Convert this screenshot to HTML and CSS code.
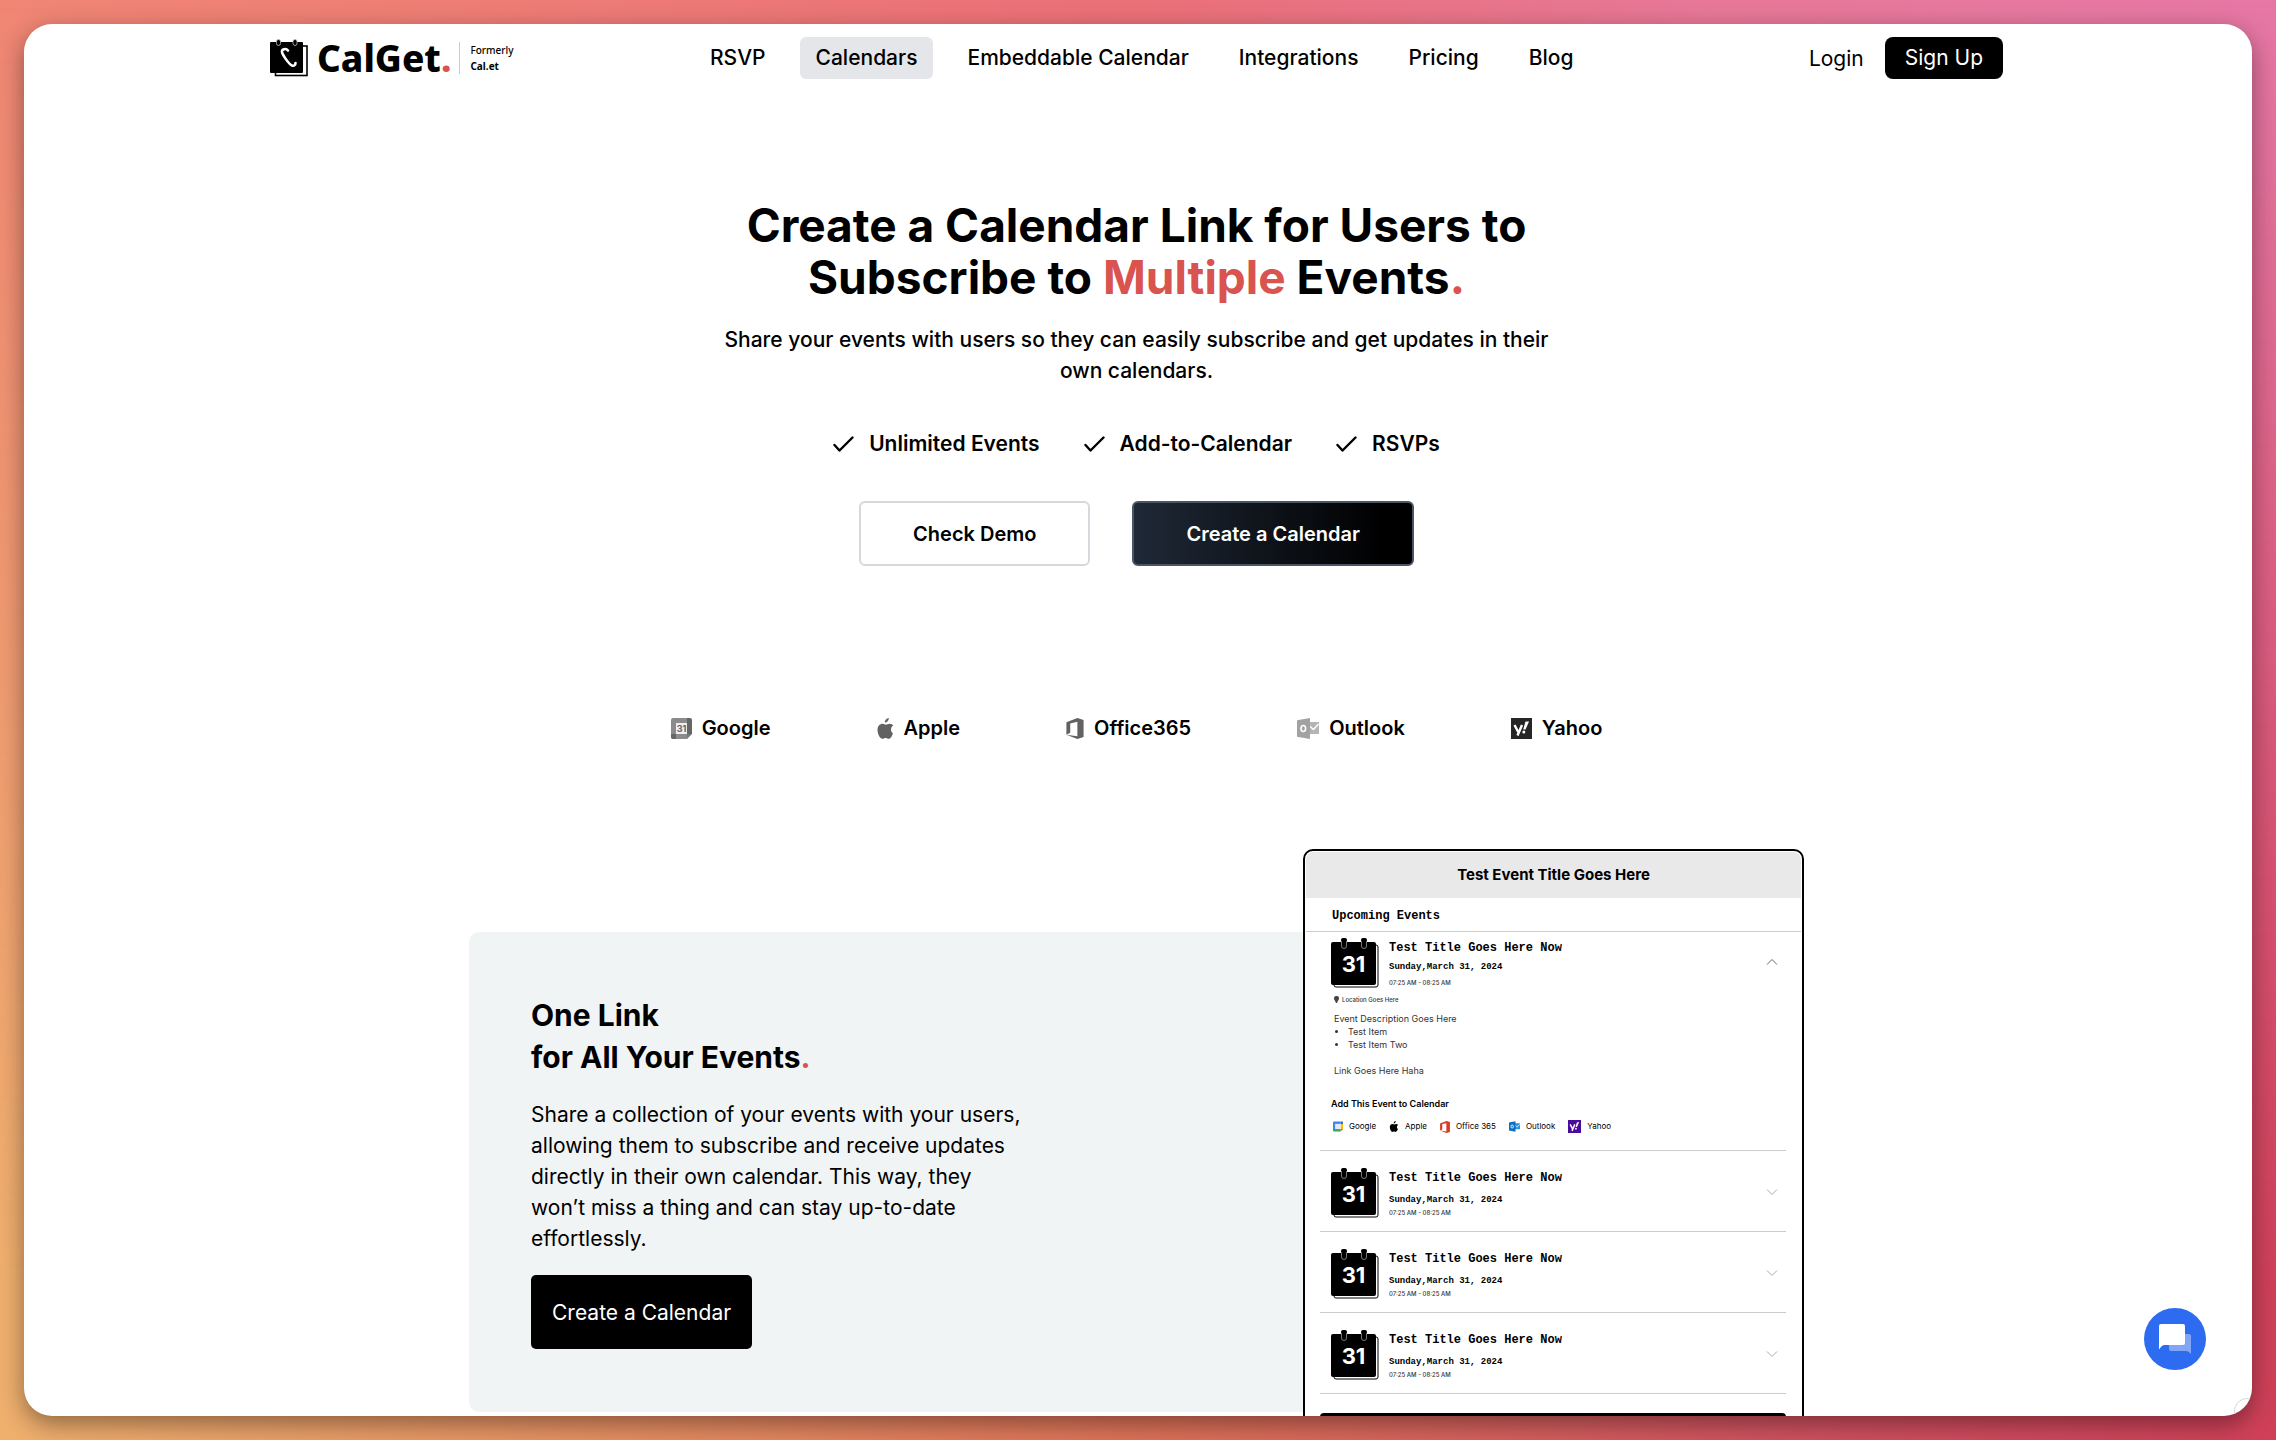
FILE: index.html
```html
<!DOCTYPE html>
<html lang="en">
<head>
<meta charset="utf-8">
<title>CalGet – Calendars</title>
<link rel="stylesheet" href="styles.css">
</head>
<body>
<svg class="sprite" aria-hidden="true">
  <symbol id="day" viewBox="0 0 48 50">
    <rect x="3" y="7" width="44" height="42" rx="2" fill="#fff" stroke="#000"/>
    <rect x="0" y="4" width="45" height="43" rx="2" fill="#000"/>
    <rect x="10.500" y="0.500" width="5" height="10" rx="2.500" fill="#000" stroke="#aaa" stroke-width=".7"/>
    <rect x="30.500" y="0.500" width="5" height="10" rx="2.500" fill="#000" stroke="#aaa" stroke-width=".7"/>
    <rect x="10" y="0" width="6" height="4" rx="2" fill="#000"/><rect x="30" y="0" width="6" height="4" rx="2" fill="#000"/>
  </symbol>
  <symbol id="check" viewBox="0 0 21 16"><path d="M1.500 9l5 5.500L19.500 1.500" fill="none" stroke="#000" stroke-width="2.400" stroke-linecap="round" stroke-linejoin="round"/></symbol>
  <symbol id="chevron" viewBox="0 0 12 8"><path d="M1 1.500l5 5 5-5" fill="none" stroke="currentColor"/></symbol>
  <symbol id="apple" viewBox="0 0 17 21"><path fill="currentColor" d="M11.800 0c.2 2.300-1.700 4.500-3.900 4.600C7.600 2.400 9.600.300 11.800 0zM16 15.400c-.9 2.200-2.400 5.300-4.200 5.400-1.200 0-1.700-.8-3.200-.8s-2 .8-3.200.8C3 20.800.500 16 .500 12c0-4 2.500-6.200 5-6.200 1.400 0 2.500.9 3.400.9.800 0 2.200-1 3.900-1 1.400.1 2.600.7 3.400 1.900-3.100 1.800-2.600 6.400-.2 7.800z"/></symbol>
  <symbol id="office" viewBox="0 0 18 22"><path fill="currentColor" d="M0 4.500L11.500 0 18 2v18l-6.500 2L0 17.500l11.500 1.600V3.900L4 5.700v9.800l-4 2z"/></symbol>
</svg>

<div class="panel">
  <header class="top">
    <a class="brand" href="#">
      <svg class="brand-mark" viewBox="0 0 38 38" aria-hidden="true">
        <rect x="5.500" y="7" width="31.500" height="29.500" fill="#fff" stroke="#000" stroke-width="1.600"/>
        <rect x="0" y="3" width="33" height="31" rx="1" fill="#000"/>
        <rect x="6.500" y=".5" width="4" height="6" rx="2" fill="#000" stroke="#bbb" stroke-width=".8"/>
        <rect x="23" y=".5" width="4" height="6" rx="2" fill="#000" stroke="#bbb" stroke-width=".8"/>
        <path d="M18 11.500c-2-2.500-6.500-1.500-6 1.500.5 2.500 6.500 12 10 13.500 2 .8 3.500-.5 3.500-2.500" fill="none" stroke="#fff" stroke-width="2.600" stroke-linecap="round"/>
      </svg>
      <span class="brand-name">CalGet<span class="accent">.</span></span>
      <span class="brand-note">Formerly<b>Cal.et</b></span>
    </a>
    <nav class="menu">
      <a href="#">RSVP</a>
      <a href="#" class="current" aria-current="page">Calendars</a>
      <a href="#">Embeddable Calendar</a>
      <a href="#">Integrations</a>
      <a href="#">Pricing</a>
      <a href="#">Blog</a>
    </nav>
    <div class="account">
      <a href="#">Login</a>
      <a href="#" class="signup">Sign Up</a>
    </div>
  </header>

  <main>
    <section class="hero">
      <h1>Create a Calendar Link for Users to Subscribe to <span class="accent">Multiple</span> Events<span class="accent">.</span></h1>
      <p class="lead">Share your events with users so they can easily subscribe and get updates in their own calendars.</p>
      <ul class="features">
        <li><svg><use href="#check"/></svg>Unlimited Events</li>
        <li><svg><use href="#check"/></svg>Add-to-Calendar</li>
        <li><svg><use href="#check"/></svg>RSVPs</li>
      </ul>
      <div class="actions">
        <button type="button" class="btn btn-light">Check Demo</button>
        <button type="button" class="btn btn-dark">Create a Calendar</button>
      </div>
    </section>

    <ul class="providers">
      <li><svg width="21" height="21" viewBox="0 0 21 21"><path fill="#8b8b8b" d="M0 2a2 2 0 012-2h14v5H5v11h11v5H2a2 2 0 01-2-2z"/><path fill="#666" d="M16 0h3a2 2 0 012 2v3h-5zM16 5h5v11h-5zM0 16h5v5H2a2 2 0 01-2-2z"/><path fill="#777" d="M16 16h5l-5 5z"/><path fill="#eee" d="M5 5h11v11H5z"/><text x="10.500" y="14" text-anchor="middle" class="mini-day">31</text></svg>Google</li>
      <li><svg class="grey" width="17" height="21"><use href="#apple"/></svg>Apple</li>
      <li><svg class="grey" width="18" height="21"><use href="#office"/></svg>Office365</li>
      <li><svg width="22" height="21" viewBox="0 0 22 21"><path fill="#b5b5b5" d="M12 4h10v12H12z"/><path d="M12.500 8l4 3.500L21.500 6" fill="none" stroke="#fff" stroke-width="1.400"/><path fill="#a2a2a2" d="M0 2.300L13 0v21L0 18.700z"/><ellipse cx="6.300" cy="10.500" rx="2.300" ry="3" fill="none" stroke="#fff" stroke-width="1.600"/></svg>Outlook</li>
      <li><svg width="21" height="21" viewBox="0 0 21 21"><path fill="#262626" d="M0 0h21v21H0z"/><path d="M3.500 7l3.700 7M11 7L6.500 17.500" stroke="#fff" stroke-width="2.400"/><path fill="#fff" d="M14.500 3.500H18L14.500 11.500h-2.300z"/><circle cx="12.800" cy="14" r="1.500" fill="#fff"/></svg>Yahoo</li>
    </ul>

    <section class="showcase">
      <div class="pitch">
        <h2>One Link<br>for All Your Events<span class="accent">.</span></h2>
        <p>Share a collection of your events with your users, allowing them to subscribe and receive updates directly in their own calendar. This way, they won’t miss a thing and can stay up-to-date effortlessly.</p>
        <button type="button" class="btn-solid">Create a Calendar</button>
      </div>

      <div class="preview">
        <h3 class="preview-title">Test Event Title Goes Here</h3>
        <h4 class="preview-sub">Upcoming Events</h4>
        <div class="events">
          <article class="event open">
            <div class="event-head">
              <div class="day"><svg><use href="#day"/></svg><span>31</span></div>
              <div class="event-info">
                <h5>Test Title Goes Here Now</h5>
                <p class="date">Sunday,March 31, 2024</p>
                <p class="time">07:25 AM - 08:25 AM</p>
              </div>
              <button type="button" class="toggle" aria-label="Collapse"><svg><use href="#chevron"/></svg></button>
            </div>
            <div class="event-body">
              <p class="location"><svg viewBox="0 0 5 7"><path fill="#444" d="M2.500 0A2.400 2.400 0 015 2.500C5 4 3.500 5 3 7H2C1.500 5 0 4 0 2.500A2.400 2.400 0 012.500 0z"/></svg>Location Goes Here</p>
              <p>Event Description Goes Here</p>
              <ul><li>Test Item</li><li>Test Item Two</li></ul>
              <p class="link">Link Goes Here Haha</p>
            </div>
            <h6>Add This Event to Calendar</h6>
            <ul class="targets">
              <li><svg width="10" height="11" viewBox="0 0 21 21"><path fill="#4285f4" d="M0 2a2 2 0 012-2h14v5H5v11H0z"/><path fill="#1967d2" d="M16 0h3a2 2 0 012 2v3h-5z"/><path fill="#fbbc04" d="M16 5h5v11h-5z"/><path fill="#34a853" d="M0 16h16v5H2a2 2 0 01-2-2z"/><path fill="#ea4335" d="M16 16h5l-5 5z"/><path fill="#dfeafd" d="M5 5h11v11H5z"/></svg>Google</li>
              <li><svg width="10" height="11"><use href="#apple"/></svg>Apple</li>
              <li><svg class="office" width="10" height="12"><use href="#office"/></svg>Office 365</li>
              <li><svg width="11" height="11" viewBox="0 0 22 21"><path fill="#2a93dd" d="M12 4h10v12H12z"/><path d="M12.500 8l4 3.500L21.500 6" fill="none" stroke="#fff" stroke-width="1.600"/><path fill="#0a6fc2" d="M0 2.300L13 0v21L0 18.700z"/><ellipse cx="6.300" cy="10.500" rx="2.500" ry="3" fill="none" stroke="#fff" stroke-width="1.800"/></svg>Outlook</li>
              <li><svg width="13" height="13" viewBox="0 0 21 21"><path fill="#4a0a9c" d="M0 0h21v21H0z"/><path d="M3.500 7l3.700 7M11 7L6.500 17.500" stroke="#fff" stroke-width="2.400"/><path fill="#fff" d="M14.500 3.500H18L14.500 11.500h-2.300z"/><circle cx="12.800" cy="14" r="1.500" fill="#fff"/></svg>Yahoo</li>
            </ul>
          </article>
          <article class="event">
            <div class="event-head">
              <div class="day"><svg><use href="#day"/></svg><span>31</span></div>
              <div class="event-info">
                <h5>Test Title Goes Here Now</h5>
                <p class="date">Sunday,March 31, 2024</p>
                <p class="time">07:25 AM - 08:25 AM</p>
              </div>
              <button type="button" class="toggle" aria-label="Expand"><svg><use href="#chevron"/></svg></button>
            </div>
          </article>
          <article class="event">
            <div class="event-head">
              <div class="day"><svg><use href="#day"/></svg><span>31</span></div>
              <div class="event-info">
                <h5>Test Title Goes Here Now</h5>
                <p class="date">Sunday,March 31, 2024</p>
                <p class="time">07:25 AM - 08:25 AM</p>
              </div>
              <button type="button" class="toggle" aria-label="Expand"><svg><use href="#chevron"/></svg></button>
            </div>
          </article>
          <article class="event">
            <div class="event-head">
              <div class="day"><svg><use href="#day"/></svg><span>31</span></div>
              <div class="event-info">
                <h5>Test Title Goes Here Now</h5>
                <p class="date">Sunday,March 31, 2024</p>
                <p class="time">07:25 AM - 08:25 AM</p>
              </div>
              <button type="button" class="toggle" aria-label="Expand"><svg><use href="#chevron"/></svg></button>
            </div>
          </article>
          <div class="preview-bar"></div>
        </div>
      </div>
    </section>
  </main>

  <button type="button" class="chat" aria-label="Open chat">
    <svg viewBox="0 0 32 30" aria-hidden="true"><path fill="#fff" fill-opacity=".4" d="M12 10h18a2 2 0 012 2v18c-2-2-3-3-5-3H12a2 2 0 01-2-2V12z"/><path fill="#fff" d="M2 0h22a2 2 0 012 2v17a2 2 0 01-2 2H6c-3 0-4 2-6 4.500V2a2 2 0 012-2z"/></svg>
  </button>
  <span class="corner"></span>
</div>
</body>
</html>
```
FILE: styles.css
```css
* { box-sizing: border-box; margin: 0; padding: 0; }

body {
  position: relative;
  height: 100vh;
  padding: 24px;
  overflow: hidden;
  color: #000;
  font-family: Inter, "Noto Sans", sans-serif;
  font-size: 21px;
  background: linear-gradient(to right, #f08674, #ea7078 50%, #e77898 75%, #e678a6);
}

/* Lower half of the two-axis backdrop, faded in from the top */
body::before {
  content: "";
  position: absolute;
  inset: 0;
  background: linear-gradient(to right, #efb06e, #dd7258 50%, #cf5260 78%, #cf4058);
  -webkit-mask-image: linear-gradient(transparent, #000 90%);
  mask-image: linear-gradient(transparent, #000 90%);
}

a { color: inherit; text-decoration: none; }
ul { list-style: none; }
button { font: inherit; color: inherit; cursor: pointer; }
svg { display: block; flex: none; }

.sprite { position: absolute; width: 0; height: 0; }
.accent { color: #d9534f; }

.panel {
  position: relative;
  height: 100%;
  padding: 13px 3px 0 0;
  overflow: hidden;
  border-radius: 28px;
  background: #fff;
  box-shadow: 0 8px 24px rgba(0, 0, 0, .4);
}

.top {
  display: flex;
  align-items: center;
  width: 78%;
  max-width: 1733px;
  height: 42px;
  margin: 0 auto;
}

.brand { display: flex; flex: none; align-items: center; width: 244px; }
.brand-mark { width: 38px; height: 38px; margin-right: 9px; }
.brand-name {
  font-family: "Noto Sans", sans-serif;
  font-size: 37px;
  font-weight: 800;
  line-height: 42px;
}
.brand-note {
  margin-left: 8px;
  padding-left: 10px;
  border-left: 1px solid #ccc;
  font-family: "Noto Sans", sans-serif;
  font-size: 10px;
  font-weight: 500;
  line-height: 16px;
}
.brand-note b { display: block; }

.menu { display: flex; gap: 18px; margin-left: 180px; font-weight: 500; }
.menu a { padding: 0 16px; border-radius: 6px; line-height: 42px; }
.menu .current { background: #e5e6ea; }

.account { display: flex; align-items: center; gap: 21px; margin-left: auto; }
.signup {
  padding: 0 20px;
  border-radius: 8px;
  color: #fff;
  background: #000;
  line-height: 42px;
}

.hero {
  display: flex;
  flex-direction: column;
  align-items: center;
  margin-top: 120px;
  text-align: center;
}
.hero h1 { max-width: 860px; font-size: 46px; font-weight: 700; line-height: 52px; }
.lead { max-width: 860px; margin-top: 21px; font-weight: 500; line-height: 31px; }

.features { display: flex; gap: 44px; margin-top: 43px; font-weight: 600; line-height: 30px; }
.features li { display: flex; align-items: center; gap: 15px; }
.features svg { width: 21px; height: 16px; }

.actions { display: flex; gap: 42px; margin-top: 42px; }
.btn {
  height: 65px;
  padding: 0 52px;
  border: 2px solid #d5d9de;
  border-radius: 6px;
  font-size: 20px;
  font-weight: 600;
}
.btn-light { background: #fff; }
.btn-dark {
  border-color: #4b5563;
  color: #fff;
  background: linear-gradient(to right, #1f2937, #000 90%);
}

.providers {
  display: flex;
  justify-content: center;
  gap: 106px;
  margin-top: 147px;
  font-size: 20px;
  font-weight: 600;
  line-height: 30px;
}
.providers li { display: flex; align-items: center; gap: 10px; }
.grey { color: #626262; }
.mini-day { font: 700 9px Inter, sans-serif; fill: #666; }

.showcase {
  display: grid;
  grid-template-columns: 1fr 501px;
  align-items: start;
  width: 60%;
  max-width: 1335px;
  margin: 106px auto 0;
}
.pitch {
  grid-column: 1 / 3;
  grid-row: 1;
  margin-top: 83px;
  padding: 62px 62px 63px;
  border-radius: 10px;
  background: #f1f4f5;
}
.pitch h2 { font-size: 30px; font-weight: 700; line-height: 42px; }
.pitch p { max-width: 496px; margin: 21px 0; line-height: 31px; }
.btn-solid {
  display: block;
  height: 74px;
  padding: 0 21px;
  border: 0;
  border-radius: 5px;
  color: #fff;
  background: #000;
}

.preview {
  grid-column: 2;
  grid-row: 1;
  height: 720px;
  padding: 1px;
  border: 2px solid #000;
  border-radius: 10px;
  background: #fff;
}
.preview-title {
  border-radius: 8px 8px 0 0;
  background: #e9e9e9;
  font-size: 15px;
  font-weight: 700;
  line-height: 46px;
  text-align: center;
}
.preview-sub {
  padding: 4px 26px 0;
  border-bottom: 1px solid #ccc;
  font: 700 12px/29px "Liberation Mono", monospace;
}
.events { padding: 0 15px 0 14px; }

.event { padding: 17px 8px 13px 11px; border-bottom: 1px solid #ccc; }
.event-head { display: flex; align-items: flex-start; }
.day {
  display: grid;
  grid-template-areas: "icon";
  width: 48px;
  height: 50px;
  color: #fff;
  font-size: 22px;
  font-weight: 700;
  line-height: 52px;
  text-align: center;
}
.day svg { grid-area: icon; width: 48px; height: 50px; }
.day span { grid-area: icon; z-index: 1; padding-right: 3px; }
.event-info { flex: 1; margin-left: 10px; padding-top: 2px; }
.event-info h5 { font: 700 12px/16px "Liberation Mono", monospace; }
.date { margin-top: 8px; font: 700 9px/12px "Liberation Mono", monospace; }
.time { margin-top: 3px; color: #333; font-size: 6px; font-weight: 500; line-height: 8px; }
.toggle { margin-top: 20px; border: 0; background: none; color: #aaa; }
.toggle svg { width: 12px; height: 8px; }

.event.open { padding-top: 6px; padding-bottom: 17px; }
.open .date { margin-top: 5px; }
.open .time { margin-top: 6px; }
.open .toggle { color: #666; }
.open .toggle svg { transform: rotate(180deg); }

.event-body { margin-top: 8px; padding-left: 3px; color: #333; font-size: 9px; line-height: 13px; }
.location { display: flex; gap: 3px; margin-bottom: 8px; font-size: 6px; font-weight: 500; line-height: 8px; }
.location svg { width: 5px; height: 7px; }
.event-body ul { padding-left: 14px; list-style: disc; }
.link { margin-top: 13px; }
.event h6 { margin-top: 20px; font-size: 9px; font-weight: 600; line-height: 13px; }
.targets { display: flex; gap: 13px; margin-top: 10px; padding-left: 2px; color: #000; font-size: 8px; line-height: 13px; }
.targets li { display: flex; align-items: center; gap: 6px; }
.office { color: #d83b1e; }

.preview-bar { height: 40px; margin-top: 19px; border-radius: 4px; background: #000; }

.chat {
  position: absolute;
  right: 46px;
  bottom: 46px;
  display: grid;
  place-items: center;
  width: 62px;
  height: 62px;
  border: 0;
  border-radius: 50%;
  background: #2d6bf0;
}
.chat svg { width: 32px; height: 30px; }

.corner {
  position: absolute;
  right: -8px;
  bottom: -8px;
  width: 26px;
  height: 26px;
  border: 1px solid #c9dcdc;
  border-radius: 50%;
}
```
